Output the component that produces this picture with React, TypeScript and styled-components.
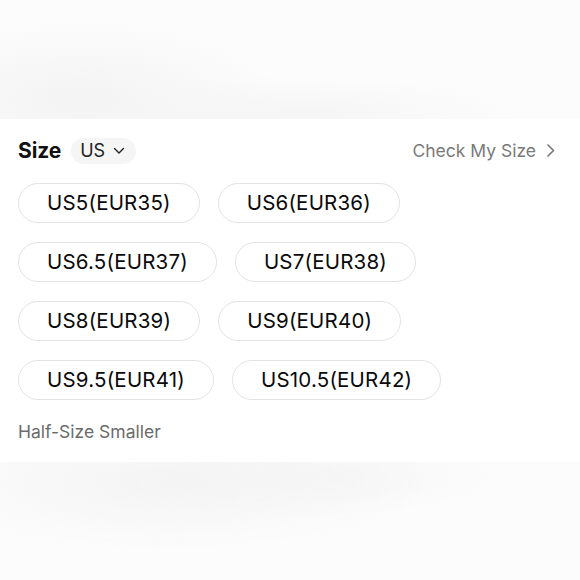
import { FC } from "react";
import styled, { createGlobalStyle } from "styled-components";

const sizes = [
  ["US5(EUR35)", "US6(EUR36)"],
  ["US6.5(EUR37)", "US7(EUR38)"],
  ["US8(EUR39)", "US9(EUR40)"],
  ["US9.5(EUR41)", "US10.5(EUR42)"],
];

const GlobalStyle = createGlobalStyle`
  html, body {
    margin: 0;
    padding: 0;
    background: #fbfbfb;
  }
  body {
    font-family: Inter, "Noto Sans", sans-serif;
    -webkit-font-smoothing: antialiased;
  }
`;

const ChevronDown: FC = () => (
  <svg width="12" height="8" viewBox="0 0 12 8" fill="none">
    <path d="M1.5 1.5 6 6l4.5-4.5" stroke="#222" strokeWidth="1.4" strokeLinecap="round" strokeLinejoin="round" />
  </svg>
);

const ChevronRight: FC = () => (
  <svg width="9" height="15" viewBox="0 0 9 15" fill="none">
    <path d="M2 2l5.5 5.5L2 13" stroke="#7a7a7a" strokeWidth="1.7" strokeLinecap="round" strokeLinejoin="round" />
  </svg>
);

export default function App() {
  return (
    <>
      <GlobalStyle />
      <Page>
        <Backdrop />
        <Card>
          <Header>
            <TitleGroup>
              <Title>Size</Title>
              <UnitChip>
                US
                <ChevronDown />
              </UnitChip>
            </TitleGroup>
            <CheckLink>
              Check My Size
              <ChevronRight />
            </CheckLink>
          </Header>
          <Grid>
            {sizes.map((row, i) => (
              <Row key={i}>
                {row.map((s) => (
                  <SizeChip key={s}>{s}</SizeChip>
                ))}
              </Row>
            ))}
          </Grid>
          <Note>Half-Size Smaller</Note>
        </Card>
        <Backdrop $bottom />
      </Page>
    </>
  );
}

const Page = styled.div`
  width: 580px;
  height: 580px;
  display: flex;
  flex-direction: column;
  overflow: hidden;
`;

const Backdrop = styled.div<{ $bottom?: boolean }>`
  flex: 1;
  background: ${({ $bottom }) =>
    $bottom
      ? "radial-gradient(ellipse 260px 70px at 170px 20px, #f4f4f4, rgba(250,250,250,0)), radial-gradient(ellipse 200px 40px at 300px 15px, #f5f5f5, rgba(250,250,250,0)), #fcfcfc"
      : "radial-gradient(ellipse 200px 80px at 80px 100px, #f3f3f3, rgba(250,250,250,0)), radial-gradient(ellipse 220px 40px at 300px 115px, #f5f5f5, rgba(250,250,250,0)), #fcfcfc"};
`;

const Card = styled.div`
  background: #fff;
  padding: 19px 18px 19px 18px;
  display: flex;
  flex-direction: column;
`;

const Header = styled.div`
  display: flex;
  align-items: center;
  justify-content: space-between;
  height: 26px;
  padding-right: 7px;
`;

const TitleGroup = styled.div`
  display: flex;
  align-items: center;
  gap: 10px;
`;

const Title = styled.span`
  font-size: 21px;
  font-weight: 700;
  color: #111;
  letter-spacing: -0.1px;
`;

const UnitChip = styled.span`
  display: inline-flex;
  align-items: center;
  gap: 8px;
  height: 26px;
  padding: 0 11px 0 9px;
  border-radius: 13px;
  background: #f5f5f5;
  font-size: 18px;
  color: #222;
`;

const CheckLink = styled.span`
  display: inline-flex;
  align-items: center;
  gap: 10px;
  font-size: 17.5px;
  color: #7a7a7a;
`;

const Grid = styled.div`
  display: flex;
  flex-direction: column;
  gap: 19px;
  margin-top: 19px;
`;

const Row = styled.div`
  display: flex;
  gap: 18px;
`;

const SizeChip = styled.div`
  height: 40px;
  box-sizing: border-box;
  display: inline-flex;
  align-items: center;
  justify-content: center;
  padding: 0 28px;
  border: 1px solid #e3e3e3;
  border-radius: 20px;
  font-size: 20.5px;
  letter-spacing: 0.2px;
  color: #0a0a0a;
`;

const Note = styled.div`
  margin-top: 21px;
  font-size: 17.5px;
  line-height: 22px;
  color: #6b6b6b;
`;
